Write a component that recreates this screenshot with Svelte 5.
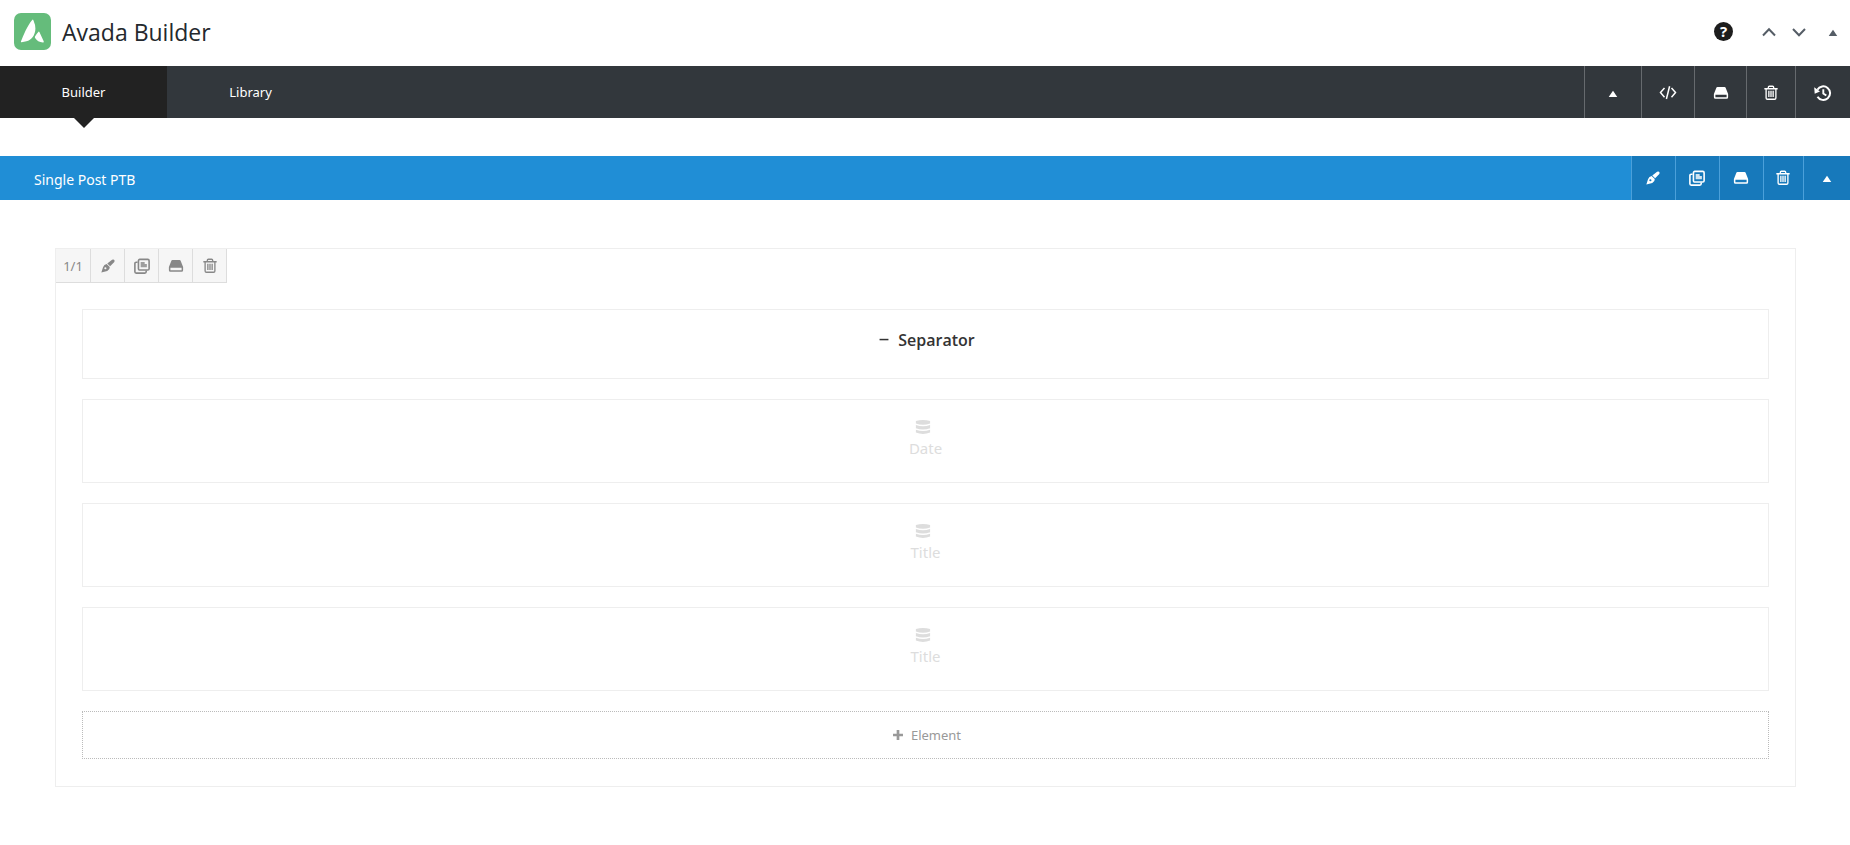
<script>
	const navTools = [
		{ icon: 'up', label: 'Toggle containers' },
		{ icon: 'code', label: 'Custom CSS' },
		{ icon: 'drive', label: 'Save template' },
		{ icon: 'trash', label: 'Delete page layout' },
		{ icon: 'history', label: 'History' }
	];
	const containerTools = [
		{ icon: 'pen', label: 'Edit container' },
		{ icon: 'clone', label: 'Clone container' },
		{ icon: 'drive', label: 'Save container' },
		{ icon: 'trash', label: 'Delete container' },
		{ icon: 'up', label: 'Toggle container' }
	];
	const columnTools = [
		{ icon: 'pen', label: 'Edit column' },
		{ icon: 'clone', label: 'Clone column' },
		{ icon: 'drive', label: 'Save column' },
		{ icon: 'trash', label: 'Delete column' }
	];
	const dynamicElements = ['Date', 'Title', 'Title'];

	let activeTab = $state('Builder');
</script>

{#snippet glyph(name)}
	<svg class="icon {name}" viewBox="0 0 18 18" aria-hidden="true">
		{#if name === 'up'}
			<path d="M9 6.500l4.800 7H4.200z" fill="currentColor" />
		{:else if name === 'code'}
			<path
				d="M5.500 4L1.500 8.600l4 4.600M12.500 4l4 4.600-4 4.600M10.600 2.200L7.400 15"
				fill="none"
				stroke="currentColor"
				stroke-width="1.500"
			/>
		{:else if name === 'drive'}
			<path
				fill-rule="evenodd"
				d="M5 2.200h8q.8 0 1.100.7L17 10v3.800q0 1.700-1.700 1.700H2.700Q1 15.500 1 13.800V10l2.900-7.100q.3-.7 1.100-.7zM2.700 11v2.700h12.600V11z"
				fill="currentColor"
			/>
		{:else if name === 'trash'}
			<path
				d="M1.500 4.200h15M6 4V2.600q0-1.200 1.200-1.200h3.600q1.200 0 1.200 1.200V4M3.500 4.500v10q0 1.500 1.500 1.500h8q1.500 0 1.500-1.500v-10M6.600 6.500v7M9 6.500v7M11.400 6.500v7"
				fill="none"
				stroke="currentColor"
				stroke-width="1.500"
			/>
		{:else if name === 'history'}
			<path
				d="M3.400 5.800A6.800 6.800 0 1 1 3.500 12.700"
				fill="none"
				stroke="currentColor"
				stroke-width="2"
			/>
			<path d="M.2 3.200l.5 6.500L6 7.500z" fill="currentColor" />
			<path d="M9.300 5.200v4.200l3 2.200" fill="none" stroke="currentColor" stroke-width="1.900" />
		{:else if name === 'pen'}
			<path
				d="M13.600 2q1.100-.9 2.200.1 1.200 1.200.3 2.300l-4.700 4.900-3.200-3.100z"
				fill="currentColor"
			/>
			<path
				fill-rule="evenodd"
				d="M7.500 6.700l3.500 3.300q.2 3.200-2.800 4.500l-6.700 1.900 1.900-6Q4.500 7.300 7.500 6.700zM6 10.300a1.200 1.200 0 1 0 .1 2.400 1.200 1.200 0 0 0-.1-2.400z"
				fill="currentColor"
			/>
		{:else if name === 'clone'}
			<rect
				x="5"
				y="1.500"
				width="12"
				height="12"
				rx="1.500"
				fill="none"
				stroke="currentColor"
				stroke-width="1.800"
			/>
			<path
				d="M4 4.800H2.500Q1 4.800 1 6.300v9.200Q1 17 2.500 17h9.700q1.500 0 1.500-1.500V14"
				fill="none"
				stroke="currentColor"
				stroke-width="1.800"
			/>
			<path d="M7.500 4.500H12v2.300h2.500v3.700h-7z" fill="currentColor" opacity="0.800" />
		{:else if name === 'database'}
			<path
				d="M1 2.200q8-2.200 16 0v3q-8 2.800-16 0zM1 6.800q8 2.800 16 0v3.700q-8 2.800-16 0zM1 12.100q8 2.800 16 0v3.200q-8 3-16 0z"
				fill="currentColor"
			/>
		{:else if name === 'minus'}
			<path d="M4 8.500h10" stroke="currentColor" stroke-width="1.700" />
		{:else if name === 'plus'}
			<path d="M3.400 9h11.200M9 3.400v11.200" stroke="currentColor" stroke-width="3" />
		{:else if name === 'chevron-up'}
			<path d="M3 12.500l6-6.200 6 6.200" fill="none" stroke="currentColor" stroke-width="2" />
		{:else if name === 'chevron-down'}
			<path d="M3 6l6 6.200L15 6" fill="none" stroke="currentColor" stroke-width="2" />
		{/if}
	</svg>
{/snippet}

{#snippet toolbar(tools)}
	{#each tools as tool}
		<button class="tool" type="button" aria-label={tool.label}>
			{@render glyph(tool.icon)}
		</button>
	{/each}
{/snippet}

<header class="header">
	<svg class="logo" viewBox="0 0 37 37" aria-hidden="true">
		<rect width="37" height="37" rx="7" fill="#65bc7b" />
		<path
			d="M18.200 6.900q.8-.7 1.200.3 2 4.600 2 8.200c0 6.500-4 11.800-9 12.900l-4.700.9q-1.200.1-.7-1C9.500 22.400 13.200 12.500 18.200 6.900z"
			fill="#fff"
		/>
		<path
			d="M24.500 18.800q.5-.6.9.2l4.300 9.200q.5 1.300-.8 1.200-5.300-.3-7.800-4.500-.4-.7-.1-1.400 1.500-2.500 3.500-4.700z"
			fill="#fff"
		/>
	</svg>
	<h1>Avada Builder</h1>
	<div class="window-tools">
		<button class="help" type="button" aria-label="Help">?</button>
		<button class="plain" type="button" aria-label="Move up">{@render glyph('chevron-up')}</button>
		<button class="plain" type="button" aria-label="Move down">
			{@render glyph('chevron-down')}
		</button>
		<button class="plain toggle" type="button" aria-label="Toggle panel">
			{@render glyph('up')}
		</button>
	</div>
</header>

<nav class="nav">
	{#each ['Builder', 'Library'] as tab}
		<button
			class="tab"
			class:active={activeTab === tab}
			type="button"
			onclick={() => (activeTab = tab)}
		>
			{tab}
		</button>
	{/each}
	<div class="tools nav-tools">{@render toolbar(navTools)}</div>
</nav>

<main>
	<section class="container-bar">
		<h2>Single Post PTB</h2>
		<div class="tools container-tools">{@render toolbar(containerTools)}</div>
	</section>

	<section class="column">
		<div class="column-tools">
			<button class="tool size" type="button">1/1</button>
			{@render toolbar(columnTools)}
		</div>
		<div class="elements">
			<div class="element separator">
				{@render glyph('minus')}
				<span>Separator</span>
			</div>
			{#each dynamicElements as name}
				<div class="element dynamic">
					{@render glyph('database')}
					<span>{name}</span>
				</div>
			{/each}
			<button class="add" type="button">
				{@render glyph('plus')}
				<span>Element</span>
			</button>
		</div>
	</section>
</main>

<style>
	:global(body) {
		margin: 0;
		background: #fff;
		color: #23282d;
		font-family: 'Noto Sans', 'Open Sans', sans-serif;
		font-size: 13px;
	}
	button {
		margin: 0;
		padding: 0;
		border: 0;
		background: none;
		color: inherit;
		font: inherit;
		cursor: pointer;
	}
	h1,
	h2 {
		margin: 0;
		font-weight: 400;
	}
	h1,
	.separator {
		font-family: 'Open Sans', 'Noto Sans', sans-serif;
	}
	.icon {
		display: block;
		flex: none;
		width: 16px;
		height: 16px;
	}

	.header {
		display: flex;
		align-items: center;
		box-sizing: border-box;
		height: 66px;
		padding: 0 9px 3px 14px;
	}
	.logo {
		width: 37px;
		height: 37px;
		margin-right: 11px;
	}
	h1 {
		font-size: 23px;
		line-height: 32px;
	}
	.window-tools {
		display: flex;
		align-items: center;
		margin-left: auto;
	}
	.help {
		width: 19px;
		height: 19px;
		margin-right: 27px;
		border-radius: 50%;
		background: #1d1d1d;
		color: #fff;
		font-size: 15px;
		font-weight: 700;
		line-height: 19px;
	}
	.plain {
		margin-right: 12px;
		color: #555d66;
	}
	.plain .icon {
		width: 18px;
		height: 18px;
	}
	.toggle {
		margin: 0 0 0 5px;
	}
	.toggle .icon {
		width: 16px;
		height: 16px;
	}

	.nav {
		display: flex;
		height: 52px;
		background: #32373c;
		color: #fff;
	}
	.tab {
		position: relative;
		width: 167px;
	}
	.tab.active {
		background: #222;
	}
	.tab.active::after {
		content: '';
		position: absolute;
		top: 100%;
		left: 50%;
		margin-left: -10px;
		border: 10px solid transparent;
		border-top-color: #222;
		border-bottom: 0;
	}

	.tools {
		display: grid;
		margin-left: auto;
	}
	.tool {
		display: flex;
		align-items: center;
		justify-content: center;
	}
	.nav-tools {
		grid-template-columns: 57px 53px 52px 49px 55px;
	}
	.nav-tools .tool {
		padding-top: 2px;
		border-left: 1px solid #666a6e;
	}
	.nav-tools .code,
	.nav-tools .history {
		width: 18px;
		height: 18px;
	}

	.container-bar {
		display: flex;
		height: 44px;
		margin-top: 38px;
		background: #208ed6;
		color: #fff;
	}
	h2 {
		padding: 4px 0 0 34px;
		font-size: 14px;
		line-height: 40px;
	}
	.container-tools {
		grid-template-columns: 44px 44px 44px 40px 47px;
	}
	.container-tools .tool {
		padding-right: 2px;
		border-left: 1px solid #4ba0da;
		background: #1779bb;
	}
	.container-tools .tool:last-child {
		padding-right: 0;
	}

	.column {
		margin: 48px 54px 0 55px;
		border: 1px solid #eee;
	}
	.column-tools {
		display: flex;
		color: #888;
	}
	.column-tools .tool {
		width: 34px;
		height: 34px;
		box-sizing: border-box;
		border-right: 1px solid #ddd;
		border-bottom: 1px solid #ddd;
		background: #f6f6f6;
	}
	.column-tools .size {
		width: 35px;
	}
	.elements {
		display: flex;
		flex-direction: column;
		gap: 20px;
		padding: 26px 26px 27px;
	}
	.element {
		display: flex;
		align-items: center;
		box-sizing: border-box;
		border: 1px solid #eee;
		line-height: 20px;
	}
	.separator {
		justify-content: center;
		gap: 6px;
		height: 70px;
		padding-bottom: 8px;
		color: #333;
		font-size: 16px;
		font-weight: 600;
	}
	.dynamic {
		flex-direction: column;
		height: 84px;
		padding-top: 19px;
		color: #ddd;
		font-size: 15px;
		gap: 3px;
	}
	.dynamic .icon {
		margin-right: 5px;
	}
	.add {
		display: flex;
		align-items: center;
		justify-content: center;
		gap: 5px;
		height: 48px;
		border: 1px dotted #bbb;
		color: #999;
	}
</style>
